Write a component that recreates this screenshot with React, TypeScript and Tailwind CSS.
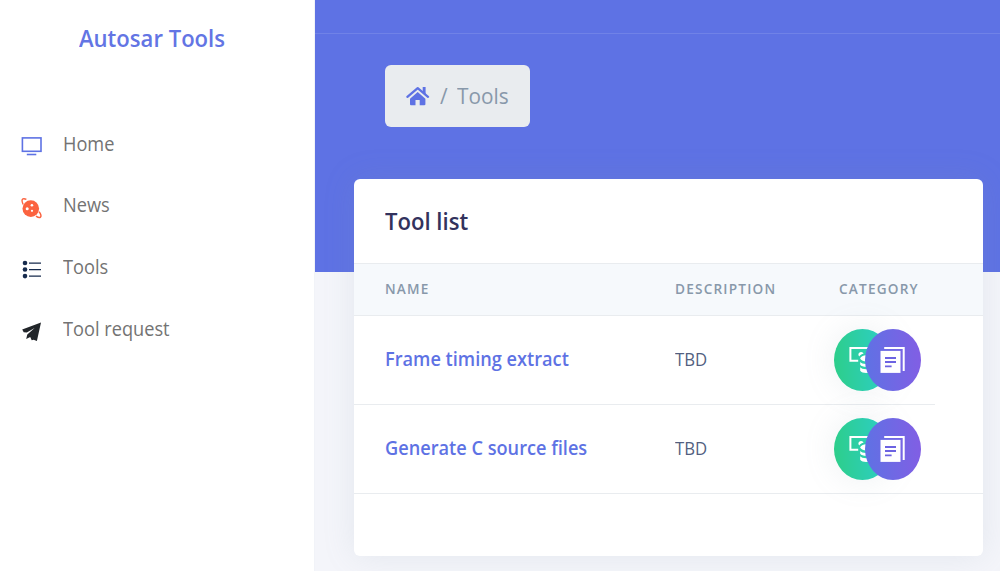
import React from "react";

function MonitorIcon() {
  return (
    <svg width="22" height="22" viewBox="0 0 22 22" fill="none" stroke="#5e72e4" strokeWidth="1.6">
      <rect x="1.4" y="2.9" width="18.6" height="13.4" />
      <path d="M5.8 19.5H15.3" />
    </svg>
  );
}

function PlanetIcon() {
  return (
    <svg width="22" height="22" viewBox="0 0 22 22">
      <circle cx="9.8" cy="11.6" r="8.3" fill="#fb6340" />
      <path d="M2.2 7.5C.9 4.8 .8 2.5 1.9 1.9 2.9 1.5 4 1.7 5.4 2.4" fill="none" stroke="#fb6340" strokeWidth="1.4" />
      <path d="M18.1 14.8c2 2.4 2.4 4.8 1.2 5.5-1 .5-2.8-.2-4.3-1.2" fill="none" stroke="#fb6340" strokeWidth="1.5" />
      <circle cx="10.9" cy="8.2" r="1.3" fill="#fff" />
      <circle cx="6.2" cy="11.7" r="1.5" fill="#fff" />
      <circle cx="11" cy="13.8" r="1.1" fill="#fff" />
    </svg>
  );
}

function ListIcon() {
  return (
    <svg width="22" height="22" viewBox="0 0 22 22" fill="#172b4d">
      <circle cx="4" cy="5" r="2.3" />
      <circle cx="4" cy="11.5" r="2.3" />
      <circle cx="4" cy="18.1" r="2.3" />
      <path d="M8 4.4h12v1.4H8zM8 10.9h12v1.4H8zM8 17.4h12v1.4H8z" />
    </svg>
  );
}

function PlaneIcon() {
  return (
    <svg width="22" height="22" viewBox="0 0 22 22" fill="#212529">
      <path d="M20 2.4 1.2 9.6l1.5 2.7 3.1.1 7.8-4.5-7.3 6.6-1.1 4.5 4-1.9 1.5 3.2 2-.5 3.2 1.2z" />
    </svg>
  );
}

function HouseIcon() {
  return (
    <svg width="24" height="21" viewBox="0 0 24 21" fill="#5e72e4">
      <path d="M11.7 6.1 4 12.7v5.6c0 .5.4.9.9.9h4.6V14h4.2v5.2h4.8c.5 0 .9-.4.9-.9v-5.6z" />
      <path d="M1.4 10.8 11.7 2.2 22 10.8" fill="none" stroke="#5e72e4" strokeWidth="2.3" strokeLinecap="round" strokeLinejoin="round" />
      <path d="M16.7 1.1h2.9v7.4l-2.9-2.4z" />
    </svg>
  );
}

function CoinsIcon() {
  return (
    <svg width="30" height="28" viewBox="0 0 30 28" fill="none" className="shrink-0">
      <path d="M10.2 14.8H2.4V2H26v9" stroke="#fff" strokeWidth="2" />
      <path d="M10.4 8.6c0-1.6 1.3-2.6 2.7-2.6 1.2 0 2.2.7 2.4 1.8-2 .3-3.4 1.2-4.3 2.6-.5-.4-.8-1-.8-1.8z" fill="#fff" />
      <ellipse cx="18.4" cy="12.3" rx="6" ry="3" fill="#fff" />
      <path d="M12.2 16c1.5 2.6 10 2.6 12 0v2.4c-2 3.2-10 3-12 .3zM12.2 21.3c1.5 2.6 10 2.6 12 0v3.2c-2 3.4-10 3.2-12 .3z" fill="#fff" />
    </svg>
  );
}

function DocumentsIcon() {
  return (
    <svg width="26" height="28" viewBox="0 0 26 28" fill="none">
      <path d="M4.2 2H23.7V25" stroke="#fff" strokeWidth="2" />
      <path d="M.5 4.9h20v22H.5z" fill="#fff" />
      <path d="M5 12h11M5 16h11M5 20.4h6.6" stroke="#6c63e2" strokeWidth="1.9" />
    </svg>
  );
}

const navigation = [
  { label: "Home", icon: <MonitorIcon /> },
  { label: "News", icon: <PlanetIcon /> },
  { label: "Tools", icon: <ListIcon /> },
  { label: "Tool request", icon: <PlaneIcon /> },
];

const tools = ["Frame timing extract", "Generate C source files"];

function Sidebar() {
  return (
    <aside className="h-full w-[315px] shrink-0 border-r border-[#f1f3f8] bg-white">
      <h1 className="ml-[79px] origin-left scale-x-92 pt-[22px] text-[24px] font-semibold leading-8 text-[#6375e4]">
        Autosar Tools
      </h1>
      <nav className="mt-[60px] flex flex-col">
        {navigation.map((item) => (
          <a key={item.label} className="flex h-[61.6px] items-center pl-[21px]">
            <span className="mt-[3px] flex w-[42px]">{item.icon}</span>
            <span className="-mt-0.5 origin-left scale-x-92 text-[19.8px] leading-6 text-[#737373]">
              {item.label}
            </span>
          </a>
        ))}
      </nav>
    </aside>
  );
}

function CategoryIcons() {
  return (
    <div className="flex">
      <span className="flex h-[62px] w-[57px] items-center rounded-[50%] bg-linear-[87deg,#2dce89,#2dcecc] pl-[14px] shadow-[0_0_32px_rgba(136,152,170,.15)]">
        <CoinsIcon />
      </span>
      <span className="-ml-[26px] flex h-[62px] w-[56px] items-center rounded-[50%] bg-linear-[87deg,#5e72e4,#825ee4] pl-[15px]">
        <DocumentsIcon />
      </span>
    </div>
  );
}

function ToolCard() {
  return (
    <section className="ml-[39px] mt-[52px] h-[377px] w-[629px] overflow-hidden rounded-md bg-white shadow-[0_0_32px_rgba(136,152,170,.15)]">
      <h2 className="ml-[31px] flex h-[84px] origin-left scale-x-92 items-center text-[24px] font-semibold text-[#32325d]">
        Tool list
      </h2>
      <div className="grid h-[53px] grid-cols-[290px_164px_1fr] items-center border-y border-[#e9ecef] bg-[#f6f9fc] pb-0.5 pl-[31px] text-[14.8px] font-semibold tracking-[1.3px] text-[#8898aa]">
        <span className="origin-left scale-x-92">NAME</span>
        <span className="origin-left scale-x-92">DESCRIPTION</span>
        <span className="origin-left scale-x-92">CATEGORY</span>
      </div>
      {tools.map((tool, index) => (
        <div
          key={tool}
          className={
            "grid h-[89px] grid-cols-[290px_159px_1fr] items-center border-b border-[#e9ecef] pl-[31px] " +
            (index === 0 ? "w-[581px]" : "w-full")
          }
        >
          <a className="-mt-0.5 origin-left scale-x-92 text-[19.75px] font-semibold text-[#5e72e4]">{tool}</a>
          <span className="origin-left scale-x-92 text-[18.2px] text-[#525f7f]">TBD</span>
          <CategoryIcons />
        </div>
      ))}
    </section>
  );
}

export default function App() {
  return (
    <div className="flex h-[571px] w-[1000px] overflow-hidden whitespace-nowrap bg-[#f4f5fa] font-['Open_Sans',sans-serif]">
      <Sidebar />
      <main className="min-w-0 flex-1 bg-[linear-gradient(#5e72e4_272px,#f4f5fa_272px)]">
        <div className="h-[34px] border-b border-[#7082e7]" />
        <div className="ml-[70px] mt-[31px] flex h-[62px] w-[145px] items-center rounded-md bg-[#e9ecef] pl-[21px] text-[22.6px] text-[#8898aa]">
          <HouseIcon />
          <span className="ml-[10px] w-[17px] origin-left scale-x-92">/</span>
          <span className="origin-left scale-x-92">Tools</span>
        </div>
        <ToolCard />
      </main>
    </div>
  );
}
